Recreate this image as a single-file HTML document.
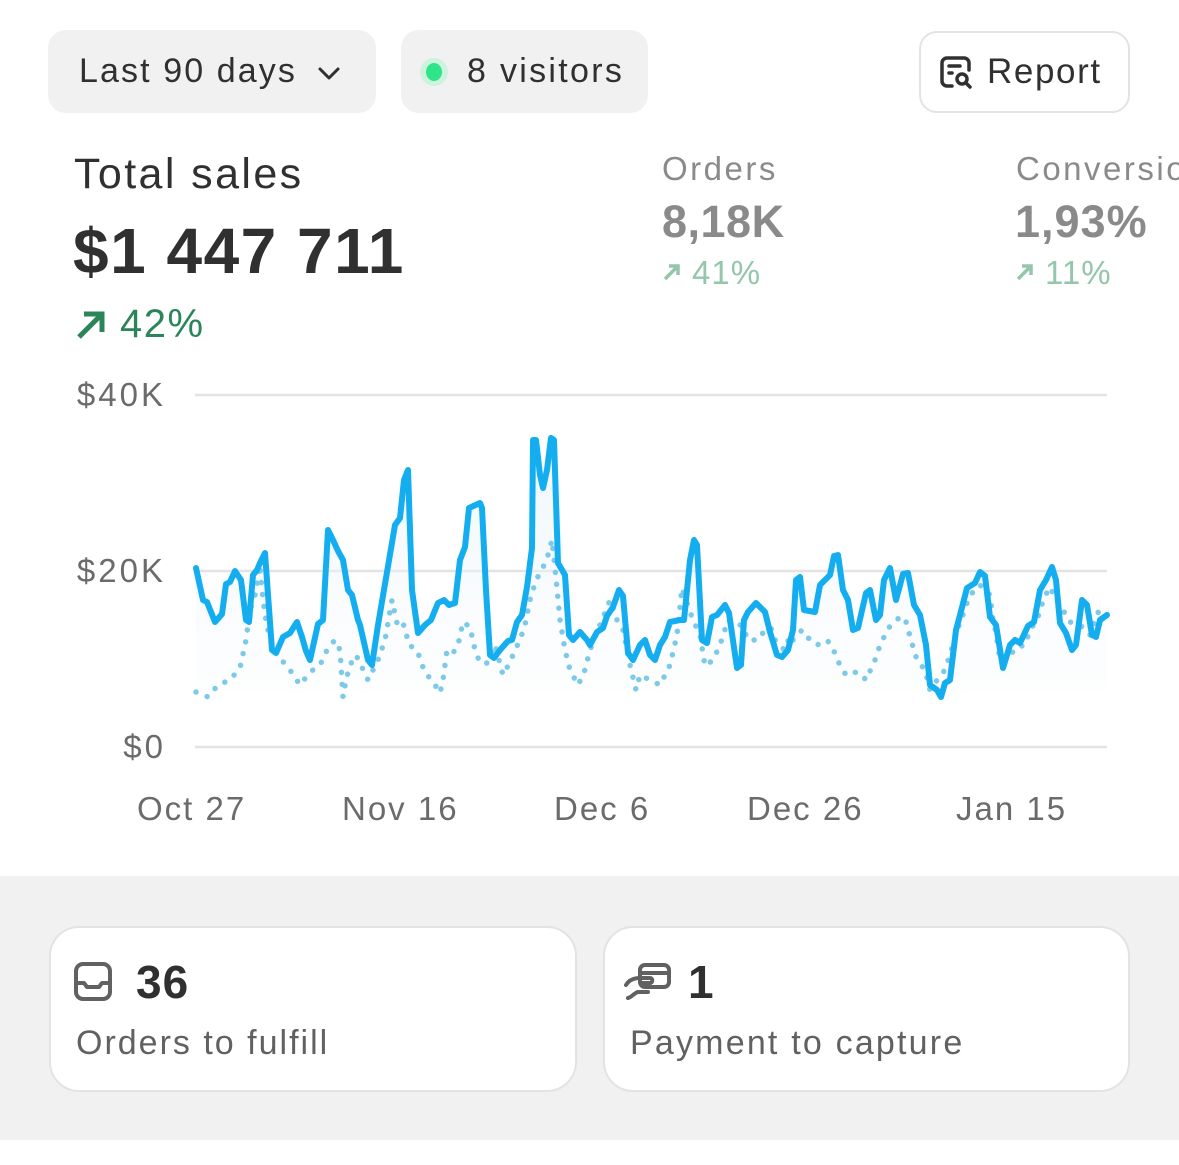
<!DOCTYPE html>
<html><head><meta charset="utf-8"><style>
*{margin:0;padding:0;box-sizing:border-box}
body{width:1179px;height:1165px;background:#fff;font-family:"Liberation Sans",sans-serif;position:relative;overflow:hidden;color:#303030}
.a{position:absolute;white-space:nowrap}
.pill{position:absolute;background:#f1f1f1;border-radius:18px;height:83px;top:30px}
.lab{color:#6b6b6b;font-size:33px;letter-spacing:2px}
.card{position:absolute;top:926px;height:166px;background:#fff;border:2px solid #e3e3e3;border-radius:30px}
</style></head><body>
<div class="pill" style="left:48px;width:328px"></div>
<div class="a" style="left:79px;top:52px;font-size:34px;color:#303030;letter-spacing:2.1px">Last 90 days</div>
<svg class="a" style="left:316px;top:62px" width="28" height="24" viewBox="0 0 28 24"><path d="M4 7l9 9 9-9" fill="none" stroke="#303030" stroke-width="3" stroke-linecap="round" stroke-linejoin="round"/></svg>
<div class="pill" style="left:401px;width:247px"></div>
<div class="a" style="left:420px;top:58px;width:28px;height:28px;border-radius:50%;background:#cdf3df"></div>
<div class="a" style="left:426px;top:63px;width:16px;height:18px;border-radius:50%;background:#2ee58a"></div>
<div class="a" style="left:467px;top:52px;font-size:34px;letter-spacing:2.3px">8 visitors</div>
<div class="a" style="left:919px;top:31px;width:211px;height:82px;border:2px solid #e3e3e3;border-radius:18px;background:#fff"></div>
<svg class="a" style="left:938px;top:55px" width="38" height="36" viewBox="0 0 38 36"><path d="M14 31H9a5 5 0 0 1-5-5V8a5 5 0 0 1 5-5h17a5 5 0 0 1 5 5v7" fill="none" stroke="#303030" stroke-width="3.5" stroke-linecap="round"/><path d="M11 11h11M11 18h3" stroke="#303030" stroke-width="3.5" stroke-linecap="round"/><circle cx="24" cy="24" r="5" fill="none" stroke="#303030" stroke-width="3.5"/><path d="M28 28l4 4" stroke="#303030" stroke-width="3.5" stroke-linecap="round"/></svg>
<div class="a" style="left:987px;top:52px;font-size:35px;letter-spacing:1.6px">Report</div>

<div class="a" style="left:74px;top:150px;font-size:43px;letter-spacing:2.4px">Total sales</div>
<div class="a" style="left:73px;top:214px;font-size:64px;font-weight:bold;letter-spacing:1.5px">$1 447 711</div>
<svg class="a" style="left:74px;top:308px" width="34" height="34" viewBox="0 0 34 34"><path d="M5 29L28 6M10 6h18v18" fill="none" stroke="#2a8558" stroke-width="5"/></svg>
<div class="a" style="left:120px;top:302px;font-size:40px;color:#2a8558;letter-spacing:1.5px">42%</div>

<div class="a" style="left:662px;top:150px;font-size:33px;color:#8a8a8a;letter-spacing:2.5px">Orders</div>
<div class="a" style="left:662px;top:196px;font-size:45px;font-weight:bold;color:#8a8a8a;letter-spacing:0.5px">8,18K</div>
<svg class="a" style="left:662px;top:262px" width="20" height="20" viewBox="0 0 20 20"><path d="M3 17L16 4M7 4h9v9" fill="none" stroke="#93c6ab" stroke-width="3.5"/></svg>
<div class="a" style="left:692px;top:254px;font-size:33px;color:#93c6ab;letter-spacing:1px">41%</div>
<div class="a" style="left:1016px;top:150px;font-size:33px;color:#8a8a8a;letter-spacing:2.5px">Conversion</div>
<div class="a" style="left:1015px;top:196px;font-size:45px;font-weight:bold;color:#8a8a8a;letter-spacing:1px">1,93%</div>
<svg class="a" style="left:1015px;top:262px" width="20" height="20" viewBox="0 0 20 20"><path d="M3 17L16 4M7 4h9v9" fill="none" stroke="#93c6ab" stroke-width="3.5"/></svg>
<div class="a" style="left:1045px;top:254px;font-size:33px;color:#93c6ab;letter-spacing:1px">11%</div>

<div class="a lab" style="right:1013px;top:376px;letter-spacing:3px">$40K</div>
<div class="a lab" style="right:1013px;top:552px;letter-spacing:3px">$20K</div>
<div class="a lab" style="right:1013px;top:728px;letter-spacing:3px">$0</div>
<div class="a lab" style="left:137px;top:790px">Oct 27</div>
<div class="a lab" style="left:342px;top:790px">Nov 16</div>
<div class="a lab" style="left:554px;top:790px">Dec 6</div>
<div class="a lab" style="left:747px;top:790px">Dec 26</div>
<div class="a lab" style="left:956px;top:790px">Jan 15</div>

<svg class="a" style="left:0;top:0" width="1179" height="870" viewBox="0 0 1179 870">
<defs><linearGradient id="g" x1="0" y1="0" x2="0" y2="1"><stop offset="0" stop-color="#e3f1f9" stop-opacity=".6"/><stop offset="1" stop-color="#f6f9fb" stop-opacity=".2"/></linearGradient></defs>
<path d="M195 395H1107M195 571H1107M195 747H1107" stroke="#e3e3e3" stroke-width="2.5"/>
<polygon fill="url(#g)" points="196,568 196,690 1107,690 1107,615 1100,620 1096,637 1092,635 1087,605 1082,600 1076,645 1072,650 1066,633 1060,623 1056,580 1052,567 1040,590 1028,626 1015,640 1003,668 990,617 980,572 967,588 950,680 941,697 930,685 920,615 908,573 896,600 890,568 876,620 866,593 853,630 838,555 820,585 800,577 793,630 782,657 765,612 748,612 737,668 729,613 712,617 702,640 694,540 684,620 670,622 655,660 640,645 628,653 619,590 603,628 590,645 573,640 565,575 554,440 547,470 540,475 536,440 532,548 522,615 508,641 490,655 482,508 469,508 460,560 449,605 431,620 418,633 408,470 400,518 386,578 372,665 360,625 343,560 328,530 318,624 306,651 297,622 283,637 272,650 265,553 253,575 246,620 241,580 230,582 222,614 215,622 203,600"/>
<polyline fill="none" stroke="#7dc9ea" stroke-width="5.5" stroke-linecap="round" stroke-dasharray="0 12" points="196,692 208,697 218,685 230,680 240,668 246,640 250,610 255,595 258,580 260,565 262,590 265,615 270,640 280,658 290,670 300,685 310,672 320,665 328,648 335,640 340,650 343,697 346,680 350,665 356,655 360,663 368,680 378,660 385,640 392,600 398,628 404,625 409,645 417,650 425,673 432,680 440,693 443,680 447,650 453,653 458,645 463,622 470,627 475,650 480,663 487,663 495,645 503,675 510,662 515,650 520,640 525,625 530,600 536,580 542,570 548,555 552,540 556,578 560,620 565,650 570,670 578,685 584,673 590,650 597,632 602,620 610,600 617,620 623,630 630,665 636,690 640,675 650,680 660,685 665,675 670,665 677,635 682,588 686,600 693,620 700,635 705,666 713,660 720,645 728,620 735,625 742,625 748,640 758,640 765,630 769,620 773,636 778,645 785,650 790,635 793,640 802,630 810,640 817,645 827,640 833,648 836,657 840,665 846,675 853,672 860,673 866,680 875,660 880,645 885,635 890,626 900,617 905,618 911,640 917,660 925,670 930,690 940,676 945,670 952,648 958,628 964,612 968,600 974,590 980,585 990,595 993,620 996,633 1000,660 1008,660 1015,648 1025,645 1030,630 1037,620 1044,598 1050,587 1055,598 1060,605 1066,615 1070,622 1080,625 1090,635 1095,620 1100,608 1105,605"/>
<polyline fill="none" stroke="#14aef0" stroke-width="6" stroke-linejoin="round" stroke-linecap="round" points="196,568 203,600 207,602 215,622 222,614 226,584 230,582 235,571 241,580 246,620 249,622 253,575 257,570 260,563 265,553 272,650 276,653 283,637 290,633 297,622 302,637 306,651 310,660 318,624 323,620 328,530 333,540 338,551 343,560 348,590 352,595 358,620 360,625 368,660 372,665 378,625 386,578 395,525 400,518 404,480 408,470 412,590 418,633 425,625 431,620 438,603 444,600 449,605 455,603 460,560 465,547 469,508 480,503 482,508 486,590 490,655 494,658 500,650 508,641 512,640 517,622 522,615 527,587 532,548 533,440 536,440 540,475 543,488 547,470 551,438 554,440 558,563 565,575 569,635 573,640 580,632 587,640 590,645 597,632 603,628 607,616 613,607 619,590 623,596 628,653 633,660 640,645 645,640 650,655 655,660 660,645 665,637 670,622 680,620 684,620 690,560 694,540 697,545 702,640 707,643 712,617 717,615 725,605 729,613 737,668 741,665 744,620 748,612 756,603 765,612 770,632 777,655 782,657 788,650 793,630 796,580 800,577 804,610 815,612 820,585 830,575 834,556 838,555 843,590 848,600 853,630 858,628 866,593 870,590 876,620 880,615 884,580 890,568 896,600 903,574 908,573 914,605 920,615 926,645 930,685 937,690 941,697 945,683 950,680 956,630 960,615 967,588 975,583 980,572 985,576 990,617 996,625 1003,668 1010,645 1015,640 1020,643 1028,626 1034,622 1040,590 1046,580 1052,567 1056,580 1060,623 1066,633 1072,650 1076,645 1082,600 1087,605 1092,635 1096,637 1100,620 1107,615"/>
</svg>

<div class="a" style="left:0;top:876px;width:1179px;height:264px;background:#f1f1f1"></div>
<div class="card" style="left:49px;width:528px"></div>
<div class="card" style="left:603px;width:527px"></div>
<svg class="a" style="left:73px;top:961px" width="42" height="42" viewBox="0 0 42 42"><rect x="3" y="3" width="34" height="35" rx="7" fill="none" stroke="#616161" stroke-width="4"/><path d="M3 22h8l3 4h12l3-4h8" fill="none" stroke="#616161" stroke-width="4" stroke-linejoin="round"/></svg>
<div class="a" style="left:136px;top:955px;font-size:46px;font-weight:bold;color:#303030;letter-spacing:1px">36</div>
<div class="a" style="left:76px;top:1024px;font-size:34px;color:#616161;letter-spacing:2px">Orders to fulfill</div>
<svg class="a" style="left:622px;top:962px" width="52" height="40" viewBox="0 0 52 40"><rect x="18" y="3" width="29" height="22" rx="5" fill="none" stroke="#616161" stroke-width="4"/><path d="M18 11h29" stroke="#616161" stroke-width="4"/><path d="M4 23c3-5 8-7 14-7h10c3 0 3 5 0 5H20M6 36c4-1 6-5 10-6h10" fill="none" stroke="#616161" stroke-width="4" stroke-linecap="round"/></svg>
<div class="a" style="left:688px;top:955px;font-size:46px;font-weight:bold;color:#303030">1</div>
<div class="a" style="left:630px;top:1024px;font-size:34px;color:#616161;letter-spacing:2.2px">Payment to capture</div>
</body></html>
